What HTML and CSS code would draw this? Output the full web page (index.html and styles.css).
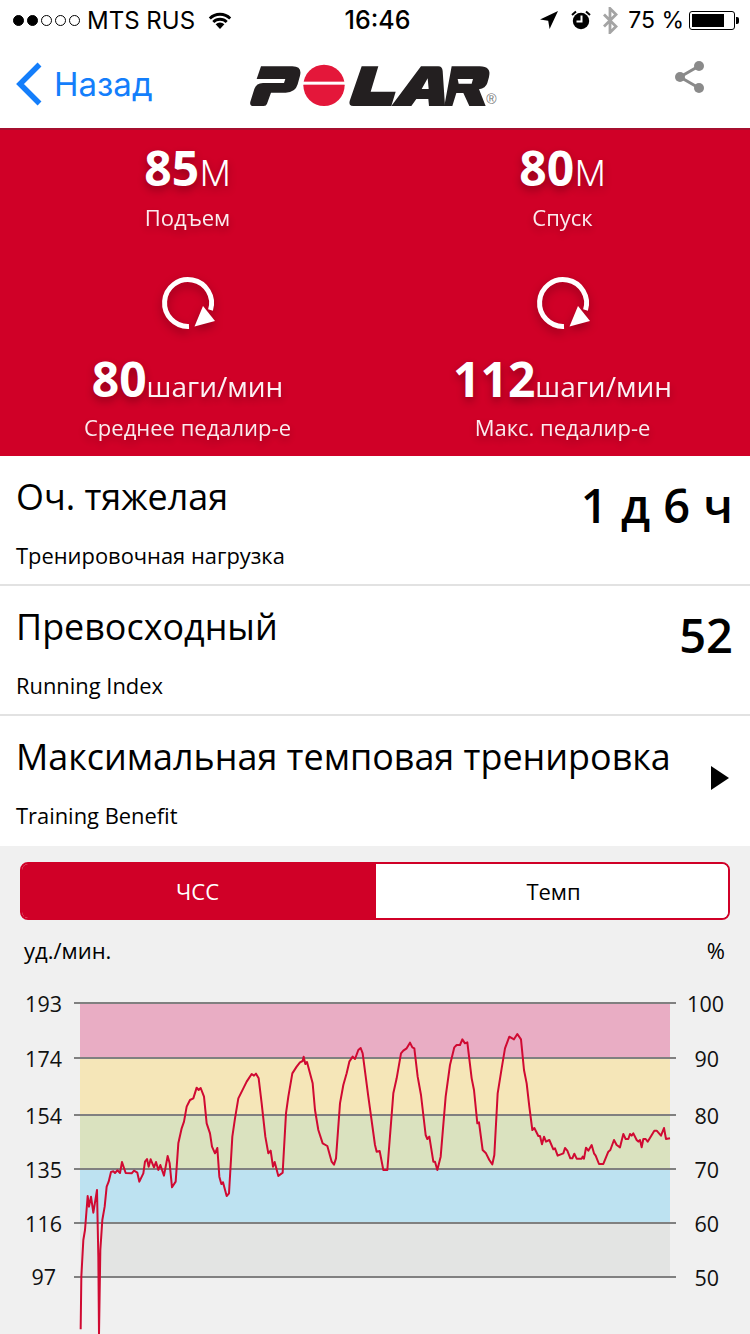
FILE: index.html
```html
<!DOCTYPE html>
<html lang="ru">
<head>
<meta charset="utf-8">
<title>Polar</title>
<link rel="stylesheet" href="styles.css">
</head>
<body>
<div class="page">
  <header class="top">
    <div class="status">
      <div class="status-left">
        <span class="signal"><i class="on"></i><i class="on"></i><i></i><i></i><i></i></span>
        <span class="carrier">MTS RUS</span>
        <svg class="wifi" viewBox="0 0 24 18" width="24" height="18"><path d="M12 18 7.600 13.300a6.200 6.200 0 0 1 8.800 0Z"/><path d="M4.300 10a10.900 10.900 0 0 1 15.400 0l-2 2.100a8 8 0 0 0-11.400 0Z"/><path d="M.8 6.400a16 16 0 0 1 22.400 0l-2 2.100a13 13 0 0 0-18.400 0Z"/></svg>
      </div>
      <div class="clock">16:46</div>
      <div class="status-right">
        <svg class="loc" viewBox="0 0 18 18" width="18" height="18"><path d="M18 0 0 8.400l8.200 1.400L9.600 18Z"/></svg>
        <svg class="alarm" viewBox="0 0 20 20" width="20" height="20"><circle cx="10" cy="11" r="8.200"/><path d="M1 5 5 1.400M19 5l-4-3.600" stroke="#000" stroke-width="2" fill="none"/><path d="M10.500 5.500v6H5.500" stroke="#fff" stroke-width="2" fill="none"/></svg>
        <svg class="bt" viewBox="0 0 16 27" width="16" height="27"><path d="M2 7.500 14 19.500 8 25.500V1.500l6 6L2 19.500" fill="none" stroke="#a4a4a4" stroke-width="2.800"/></svg>
        <span class="batt-text">75 %</span>
        <span class="batt"><span class="batt-fill"></span></span>
        <span class="batt-nub"></span>
      </div>
    </div>
    <nav class="nav">
      <div class="back">
        <svg class="chev" viewBox="0 0 28 46" width="28" height="46"><path d="M24.500 3.500 5 23l19.500 19.500" fill="none" stroke="#147efb" stroke-width="5.500"/></svg>
        <span>Назад</span>
      </div>
      <svg class="logo" viewBox="0 0 780 165" width="260" height="55">
        <path class="lk" d="M48 28H142Q172 28 165 56L158 82Q151 107 122 107H78L66 140Q64 147 56 147H26Q13 147 16 134L28 96Q34 78 54 78H117L121 66H35Z"/>
        <circle class="lr" cx="237" cy="85" r="62"/>
        <rect class="lw" x="170" y="74" width="134" height="9"/>
        <path class="lk" d="M350 28H400L377 104H452L439 147H325Q310 147 314 132Z"/>
        <path class="lk" fill-rule="evenodd" d="M528 28H580Q592 28 593 42L600 147H552L550 126H514L499 147H439ZM548 64 530 96H551Z"/>
        <path class="lk" fill-rule="evenodd" d="M620 28H704Q740 28 732 60L727 78Q722 94 702 97L722 147H673L655 108H634L622 147H598ZM641 80 638 66H684L680 80Z"/>
        <text class="lreg" x="724" y="141">®</text>
      </svg>
      <svg class="share" viewBox="0 0 32 32" width="32" height="32"><path d="M24 5 5 16l19 11" fill="none" stroke="#8a8a8a" stroke-width="3"/><circle cx="24" cy="5" r="5" fill="#8a8a8a"/><circle cx="5" cy="16" r="5" fill="#8a8a8a"/><circle cx="24" cy="27" r="5" fill="#8a8a8a"/></svg>
    </nav>
  </header>

  <section class="stats">
    <div class="stat">
      <div class="val"><b>85</b><span class="big-unit">м</span></div>
      <div class="lab">Подъем</div>
    </div>
    <div class="stat">
      <div class="val"><b>80</b><span class="big-unit">м</span></div>
      <div class="lab">Спуск</div>
    </div>
    <div class="stat">
      <svg class="cyc" viewBox="0 0 60 60" width="60" height="60"><path d="M31 53.500A23.500 23.500 0 1 1 52.500 37" fill="none" stroke="#fff" stroke-width="5"/><path d="M36.500 53.500 45 33 57 48Z" fill="#fff"/></svg>
      <div class="val val-low"><b>80</b><span class="unit">шаги/мин</span></div>
      <div class="lab">Среднее педалир-е</div>
    </div>
    <div class="stat">
      <svg class="cyc" viewBox="0 0 60 60" width="60" height="60"><path d="M31 53.500A23.500 23.500 0 1 1 52.500 37" fill="none" stroke="#fff" stroke-width="5"/><path d="M36.500 53.500 45 33 57 48Z" fill="#fff"/></svg>
      <div class="val val-low"><b>112</b><span class="unit">шаги/мин</span></div>
      <div class="lab">Макс. педалир-е</div>
    </div>
  </section>

  <section class="rows">
    <div class="row">
      <div class="row-main"><div class="title">Оч. тяжелая</div><div class="sub">Тренировочная нагрузка</div></div>
      <div class="num num-wide">1 д 6 ч</div>
    </div>
    <div class="row">
      <div class="row-main"><div class="title">Превосходный</div><div class="sub">Running Index</div></div>
      <div class="num">52</div>
    </div>
    <div class="row row-last">
      <div class="row-main"><div class="title">Максимальная темповая тренировка</div><div class="sub">Training Benefit</div></div>
      <svg class="more" viewBox="0 0 18 24" width="18" height="24"><path d="M0 0 18 12 0 24Z"/></svg>
    </div>
  </section>

  <section class="graph">
    <div class="seg"><div class="seg-a">ЧСС</div><div class="seg-b">Темп</div></div>
    <div class="units"><span>уд./мин.</span><span>%</span></div>
    <svg class="chart" viewBox="0 0 750 344" width="750" height="344">
      <rect class="z1" x="80" y="13" width="590" height="55"/>
      <rect class="z2" x="80" y="68" width="590" height="57"/>
      <rect class="z3" x="80" y="125" width="590" height="54"/>
      <rect class="z4" x="80" y="179" width="590" height="54"/>
      <rect class="z5" x="80" y="233" width="590" height="54"/>
      <g class="grid">
        <line x1="74" x2="676" y1="13" y2="13"/>
        <line x1="74" x2="676" y1="68" y2="68"/>
        <line x1="74" x2="676" y1="125" y2="125"/>
        <line x1="74" x2="676" y1="179" y2="179"/>
        <line x1="74" x2="676" y1="233" y2="233"/>
        <line x1="74" x2="676" y1="287" y2="287"/>
      </g>
      <g class="ax">
        <text x="62" y="22">193</text><text x="62" y="77">174</text><text x="62" y="134">154</text><text x="62" y="188">135</text><text x="62" y="242">116</text><text x="56" y="295">97</text>
      </g>
      <g class="ax ax-r">
        <text x="724" y="22">100</text><text x="719" y="77">90</text><text x="719" y="134">80</text><text x="719" y="188">70</text><text x="719" y="242">60</text><text x="719" y="296">50</text>
      </g>
      <g transform="scale(.33333)">
        <polyline class="hr" points="242,1018 244,860 250,750 255,720 263,618 267,650 273,620 280,668 291,600 295,800 297,1032 301,780 307,690 314,650 320,590 326,575 333,546 340,544 345,549 352,541 360,549 366,516 377,549 395,550 402,542 412,548 418,575 430,550 435,515 441,507 446,530 452,508 462,532 468,516 475,540 481,525 492,557 503,498 509,520 516,592 527,575 535,460 545,415 552,395 560,350 570,330 580,325 590,293 596,300 602,294 612,320 620,400 630,430 636,470 645,490 652,474 658,560 664,582 669,577 680,618 687,610 697,440 705,385 715,325 730,295 740,275 755,252 762,257 768,251 776,265 785,340 796,440 805,490 812,482 819,530 824,516 835,558 848,548 858,370 865,320 877,250 890,230 900,217 908,213 911,200 916,222 921,216 938,280 945,360 955,420 968,460 982,468 995,515 1002,524 1008,505 1020,340 1030,285 1040,250 1048,215 1058,200 1065,207 1075,180 1082,174 1088,190 1105,320 1125,465 1130,485 1139,483 1150,540 1162,540 1180,310 1190,265 1203,190 1210,182 1220,175 1230,158 1237,172 1243,175 1253,260 1263,315 1277,435 1282,447 1288,440 1300,515 1305,515 1312,540 1322,500 1337,320 1350,225 1363,172 1370,165 1380,165 1387,148 1395,160 1402,157 1415,265 1422,300 1432,400 1437,397 1448,480 1458,490 1468,510 1477,523 1483,495 1493,310 1505,235 1515,175 1528,140 1542,148 1552,132 1563,148 1572,240 1580,280 1588,350 1597,420 1603,414 1615,438 1620,438 1626,463 1632,440 1638,455 1648,450 1660,478 1665,475 1673,497 1690,490 1695,474 1702,482 1711,505 1717,505 1723,491 1730,506 1745,506 1748,500 1752,506 1758,473 1765,482 1775,465 1782,490 1787,497 1797,522 1810,522 1825,485 1831,480 1842,450 1850,465 1860,472 1870,432 1877,447 1885,447 1890,432 1895,437 1900,430 1910,450 1915,455 1920,450 1925,472 1930,447 1937,447 1943,455 1963,422 1970,422 1983,437 1992,414 1998,447 2010,445"/>
      </g>
    </svg>
  </section>
</div>
</body>
</html>
```
FILE: styles.css
```css
* { box-sizing: border-box; margin: 0; padding: 0; }
html, body { background: #f0f0f0; }
.page { width: 750px; height: 1334px; overflow: hidden; font-family: "Open Sans", sans-serif; color: #000; }

.top { background: #fff; height: 128px; }
.status { height: 40px; display: grid; grid-template-columns: 1fr auto 1fr; align-items: center; font-family: Inter, sans-serif; font-size: 24px; padding: 0 11px 0 13px; }
.status-left { display: flex; align-items: center; }
.signal { display: flex; gap: 3px; margin-right: 7px; }
.signal i { width: 11px; height: 11px; border-radius: 50%; border: 1px solid #000; display: block; }
.signal i.on { background: #000; }
.wifi { margin-left: 13px; }
.clock { font-size: 25px; font-weight: 500; margin-left: 3px; }
.status-right { display: flex; align-items: center; justify-content: flex-end; }
.alarm { margin-left: 13px; }
.bt { margin-left: 11px; }
.batt-text { margin-left: 10px; font-size: 23px; }
.batt { width: 46px; height: 19px; border: 1px solid #000; border-radius: 3px; margin-left: 5px; padding: 2px; display: block; }
.batt-fill { display: block; width: 32px; height: 100%; background: #000; }
.batt-nub { width: 3px; height: 7px; background: #000; margin-left: 1px; border-radius: 0 2px 2px 0; }

.nav { height: 88px; display: grid; grid-template-columns: 1fr auto 1fr; align-items: center; }
.back { display: flex; align-items: center; gap: 11px; padding-left: 15px; color: #147efb; font-family: Inter, sans-serif; font-size: 33px; }
.logo { display: block; }
.lk { fill: #231f20; }
.lr { fill: #e4173a; }
.lw { fill: #fff; }
.lreg { font: 42px "Liberation Sans", sans-serif; fill: #777; }
.share { justify-self: end; margin-right: 43px; margin-top: -14px; }

.stats { background: #d00027; border-top: 2px solid #a60f2f; height: 328px; display: grid; grid-template-columns: 1fr 1fr; grid-template-rows: 134px 1fr; color: #fff; text-align: center; text-shadow: 0 4px 8px rgba(0,0,0,.3); }
.stat { display: flex; flex-direction: column; align-items: center; }
.val { height: 76px; line-height: 76px; white-space: nowrap; }
.val b { font-size: 48px; font-weight: 700; }
.big-unit { font-size: 47px; font-weight: 300; }
.unit { font-size: 28px; font-weight: 400; opacity: .95; }
.lab { font-size: 22px; line-height: 30px; opacity: .92; margin-top: -4px; }
.cyc { display: block; margin-top: 9px; filter: drop-shadow(0 4px 5px rgba(0,0,0,.3)); }
.val-low { height: 71px; line-height: 68px; margin-top: 12px; }

.rows { background: #fff; }
.row { height: 130px; display: flex; justify-content: space-between; padding: 0 17px 0 16px; border-bottom: 2px solid #e2e2e2; }
.row-last { height: 130px; border-bottom: 0; }
.row-main { padding-top: 19px; }
.title { font-size: 35.900px; line-height: 44px; }
.sub { font-size: 21.900px; line-height: 30px; margin-top: 22px; }
.num { font-size: 47px; font-weight: 600; line-height: 60px; padding-top: 19px; }
.num-wide { word-spacing: 1px; }
.more { margin: 50px 4px 0 0; fill: #000; }

.graph { background: #f0f0f0; height: 488px; padding-top: 16px; }
.seg { margin: 0 20px; height: 58px; display: flex; border: 2px solid #d00027; border-radius: 8px; overflow: hidden; font-size: 22px; }
.seg-a { width: 354px; background: #d00027; color: #fff; display: flex; align-items: center; justify-content: center; padding-right: 3px; }
.seg-b { flex: 1; background: #fff; display: flex; align-items: center; justify-content: center; padding-left: 3px; }
.units { display: flex; justify-content: space-between; padding: 15px 25px 0 24px; height: 70px; font-size: 22px; line-height: 30px; }
.chart { display: block; }
.z1 { fill: #e9adc4; } .z2 { fill: #f5e6b8; } .z3 { fill: #dae2bf; } .z4 { fill: #bde2f1; } .z5 { fill: #e3e4e3; }
.grid line { stroke: #808080; stroke-width: 2; }
.ax text { font-size: 21.500px; fill: #111; text-anchor: end; font-family: "Open Sans", sans-serif; }
.hr { fill: none; stroke: #d00a32; stroke-width: 6; stroke-linejoin: round; }
```
